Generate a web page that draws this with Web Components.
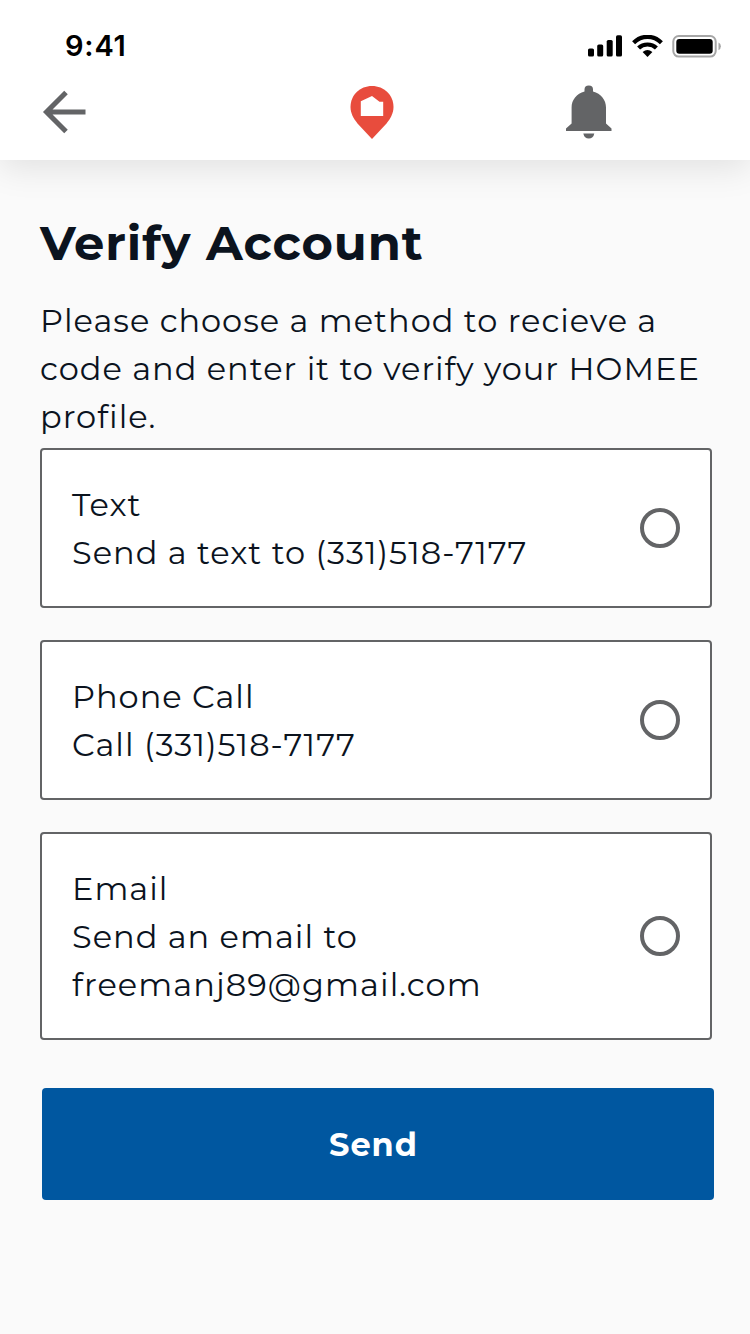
<!DOCTYPE html>
<html lang="en">
<head>
<meta charset="utf-8">
<title>Verify Account</title>
<style>
  body {
    margin: 0;
    background: #fafafa;
    color: #0b131e;
    font-family: Montserrat, Inter, sans-serif;
    letter-spacing: 1px;
  }
</style>
</head>
<body>
<verify-page></verify-page>

<script>
function defineElement(name, html) {
  const template = document.createElement('template');
  template.innerHTML = html;

  customElements.define(name, class extends HTMLElement {
    constructor() {
      super();
      this.attachShadow({ mode: 'open' });
      this.shadowRoot.appendChild(template.content.cloneNode(true));
    }
  });
}

defineElement('text-line', `
<style>
  :host {
    display: block;
    font-size: 32px;
    line-height: 48px;
    white-space: nowrap;
  }
</style>
<slot></slot>
`);

defineElement('status-bar', `
<style>
  :host {
    display: flex;
    align-items: center;
    justify-content: space-between;
    height: 70px;
    padding: 0 29px 0 65px;
    color: #000;
  }

  .time {
    font: 600 29px/35px Inter, sans-serif;
    letter-spacing: 0.8px;
    padding-top: 20px;
  }

  .icons {
    display: flex;
    gap: 9px;
    padding-top: 22px;
  }

  svg {
    display: block;
  }
</style>
<span class="time">9:41</span>
<div class="icons">
  <svg width="35" height="23" viewBox="0 0 35 23">
    <rect x="0" y="13.500" width="6" height="8" rx="1.600"/>
    <rect x="9.200" y="9.500" width="6" height="12" rx="1.600"/>
    <rect x="18.700" y="5" width="6" height="16.500" rx="1.600"/>
    <rect x="28" y="0.300" width="6" height="21.200" rx="1.600"/>
  </svg>
  <svg width="31" height="23" viewBox="0 0 31 23">
    <g fill="none" stroke="#000" stroke-width="4.200">
      <path d="M1.600 7.700Q7.500 1.800 15.500 1.800T29.400 7.700"/>
      <path d="M6.600 13.100Q10.200 9.500 15.500 9.500T24.400 13.100"/>
    </g>
    <path d="M10.600 17.100Q15.500 13 20.400 17.100L15.500 21.900Z"/>
  </svg>
  <svg width="49" height="23" viewBox="0 0 49 23">
    <rect x="1.300" y="1" width="42.400" height="20.600" rx="5.500" fill="none" stroke="#a6a6a6" stroke-width="2"/>
    <rect x="4.300" y="4" width="36.400" height="14.800" rx="3"/>
    <path d="M46.500 7.400Q48.900 8.500 48.900 11.300T46.500 15.200Z" fill="#a6a6a6"/>
  </svg>
</div>
`);

defineElement('nav-bar', `
<style>
  :host {
    display: flex;
    align-items: flex-start;
    padding: 14px 0 0 42px;
  }

  svg {
    display: block;
    flex: none;
  }

  .pin {
    margin-left: 265px;
  }

  .bell {
    margin-left: 172px;
  }
</style>
<svg class="back" width="44" height="56" viewBox="0 0 44 56" fill="none" stroke="#636466" stroke-width="5">
  <path d="M24 8.500L4.500 28L24 47.500M4.500 28H43.500"/>
</svg>
<svg class="pin" width="44" height="56" viewBox="-0.500 0 44 56" style="margin-left: 264px">
  <path d="M21.500 2C9.500 2 0 11 0 23C0 29 3 34.500 7 39.500L21.500 55L36 39.500C40 34.500 43 29 43 23C43 11 33.500 2 21.500 2Z" fill="#e84c3d"/>
  <path d="M10.300 17.300L21.500 12L29 17.800H32.700V32H10.300Z" fill="#fff"/>
</svg>
<svg class="bell" width="46" height="56" viewBox="0 0 46 56" fill="#636466">
  <path d="M18.500 7.500V5.500Q18.500 1.500 22.800 1.500T27 5.500V7.500C35 9.500 40 16 40 23.500V39.500L45.500 44.500V47H0V44.500L5.600 39.500V23.500C5.600 16 10.600 9.500 18.500 7.500Z"/>
  <path d="M17.300 49.500H28.300Q27.300 54.500 22.800 54.500T17.300 49.500Z"/>
</svg>
`);

defineElement('app-header', `
<style>
  :host {
    display: block;
    height: 160px;
    background: #fff;
    box-shadow: 0 8px 32px rgba(0, 0, 0, 0.1);
  }
</style>
<status-bar></status-bar>
<nav-bar></nav-bar>
`);

defineElement('method-option', `
<style>
  :host {
    display: flex;
    align-items: center;
    justify-content: space-between;
    box-sizing: border-box;
    padding: 30px;
    background: #fff;
    border: 2px solid #636466;
    border-radius: 4px;
  }

  .copy {
    padding-top: 1px;
    margin-bottom: -1px;
  }

  .radio {
    box-sizing: border-box;
    width: 40px;
    height: 40px;
    flex: none;
    border: 4px solid #636466;
    border-radius: 50%;
  }
</style>
<div class="copy"><slot></slot></div>
<div class="radio" role="radio" aria-checked="false"></div>
`);

defineElement('send-button', `
<style>
  :host {
    display: block;
  }

  button {
    display: block;
    width: 672px;
    height: 112px;
    padding: 1px 9px 0 0;
    border: 0;
    border-radius: 4px;
    background: #0057a0;
    color: #fff;
    font: 700 32px/48px Montserrat, Inter, sans-serif;
    letter-spacing: 1px;
    cursor: pointer;
  }
</style>
<button><slot></slot></button>
`);

defineElement('verify-page', `
<style>
  :host {
    display: block;
    min-height: 1334px;
  }

  main {
    padding: 51px 38px 0 40px;
  }

  h1 {
    margin: 0 0 22px;
    font-size: 48px;
    font-weight: 700;
    line-height: 64px;
    letter-spacing: 0.95px;
    white-space: nowrap;
  }

  .options {
    display: grid;
    gap: 32px;
    margin: 7px 0 48px;
  }

  .email {
    letter-spacing: 1.08px;
  }

  send-button {
    margin-left: 2px;
  }
</style>
<app-header></app-header>
<main>
  <h1>Verify Account</h1>
  <text-line>Please choose a method to recieve a</text-line>
  <text-line>code and enter it to verify your HOMEE</text-line>
  <text-line>profile.</text-line>
  <div class="options">
    <method-option>
      <text-line>Text</text-line>
      <text-line>Send a text to (331)518-7177</text-line>
    </method-option>
    <method-option>
      <text-line>Phone Call</text-line>
      <text-line>Call (331)518-7177</text-line>
    </method-option>
    <method-option>
      <text-line>Email</text-line>
      <text-line>Send an email to</text-line>
      <text-line class="email">freemanj89@gmail.com</text-line>
    </method-option>
  </div>
  <send-button>Send</send-button>
</main>
`);
</script>
</body>
</html>
